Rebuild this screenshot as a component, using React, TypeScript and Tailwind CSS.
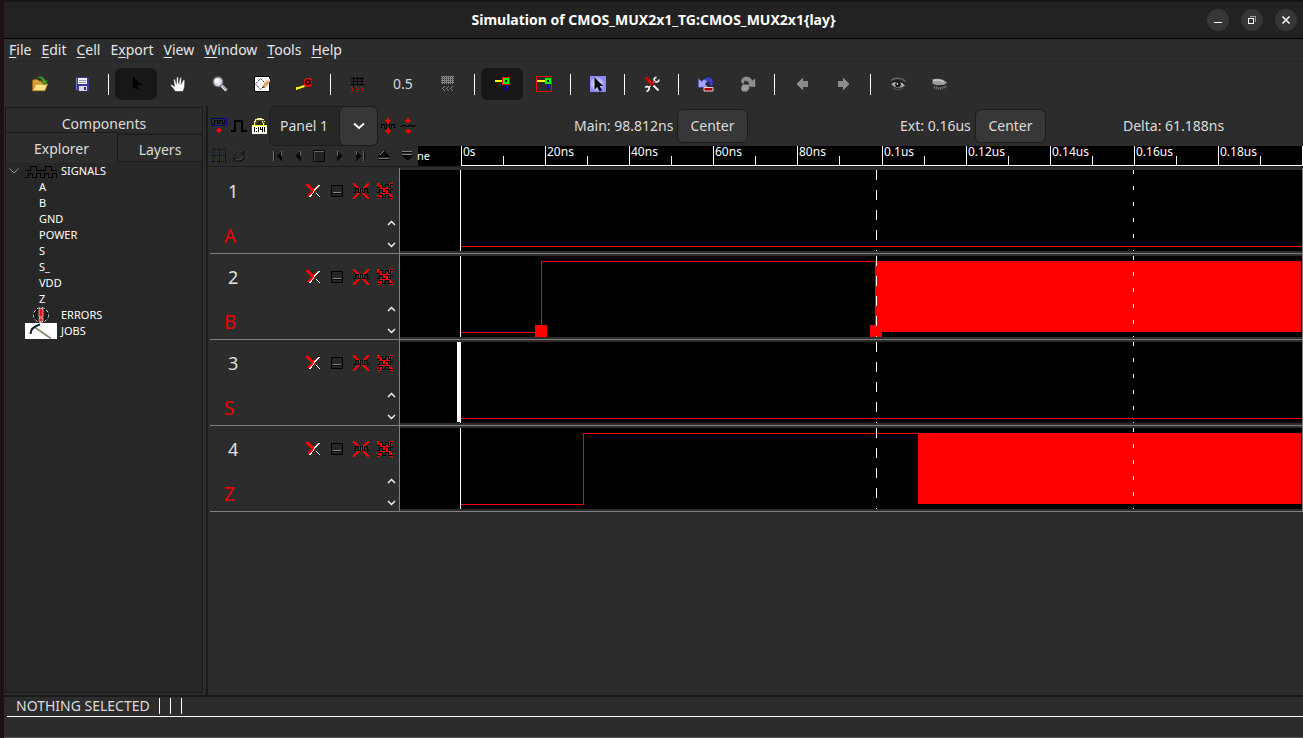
import React from "react";

type IconProps = { children: React.ReactNode; w?: number; h?: number };

function Pic({ children, w = 16, h = 16 }: IconProps) {
  return (
    <svg width={w} height={h} viewBox={`0 0 ${w} ${h}`} className="block shrink-0" aria-hidden="true" shapeRendering="crispEdges">
      {children}
    </svg>
  );
}

function Smooth({ children, w = 16, h = 16 }: IconProps) {
  return (
    <svg width={w} height={h} viewBox={`0 0 ${w} ${h}`} className="block shrink-0" aria-hidden="true" fill="none">
      {children}
    </svg>
  );
}

/* ---------- main toolbar icons ---------- */

const OpenIcon = () => (
  <Smooth>
    <path d="M.5 14.500V5l1-1.500h4L7 5h5.500v9.500z" fill="#d9a23e" stroke="#8f6418" />
    <path d="M.8 14.700 3.500 8h12L12.800 14.700z" fill="#fbe08a" stroke="#b98a2a" />
    <path d="M5 1.500C8-.300 12 .300 13 4.500h2.800L12.300 9 9 5h1.800C10 2.500 8 1.800 5 1.500z" fill="#4aa52c" stroke="#245f12" strokeWidth=".6" />
  </Smooth>
);

const SaveIcon = () => (
  <Pic>
    <path d="M2 1h12v1h1v13H3l-1-1z" fill="#3a3a9c" />
    <path d="M4 2h9v6H4z" fill="#f2f2f2" />
    <path d="M5 4h7v1H5zM5 6h7v1H5z" fill="#9c9cac" />
    <path d="M5 10h8v5H5z" fill="#d8d8e0" />
    <path d="M10 11h2v3h-2z" fill="#2a2a80" />
    <path d="M2 2h1v12H2z" fill="#7676c6" />
  </Pic>
);

const PointerIcon = () => (
  <Pic>
    <path d="M5 1h1v1h1v1h1v1h1v1h1v1h1v1h1v1h1v1H9v1h1v2h1v2H9v-1H8v-2H7v1H6v1H5z" fill="#000" />
  </Pic>
);

const HandIcon = () => (
  <Smooth>
    <path
      d="M5 15.500C4 13 2.500 12 .8 9.700c-.5-1 .8-1.500 1.600-.8l2 1.600L3.600 3.800c0-1.200 1.400-1.200 1.700 0l1 3.600L6.600 1.600c.2-1.200 1.600-1.100 1.700 0l.3 5.600L10 2c.4-1 1.700-.8 1.600.4l-.4 5.400 1.900-3.600c.7-1 1.900-.4 1.700.7C14.500 8 15 11 14 12.800l-1 2.700z"
      fill="#fff"
      stroke="#111"
      strokeWidth=".5"
    />
    <path d="M6.500 5.500v3.500M9 5.500v3.500M11.200 6v3" stroke="#777" strokeWidth=".5" />
  </Smooth>
);

const ZoomIcon = () => (
  <Smooth>
    <path d="m9.500 9.500 5 5" stroke="#e8e8e8" strokeWidth="3" />
    <path d="m10 9.500 5 5" stroke="#666" strokeWidth="1" />
    <circle cx="6" cy="5.800" r="4.800" fill="#dcdcec" stroke="#777" strokeWidth="1.300" />
    <circle cx="5" cy="4.800" r="2.200" fill="#fafaff" />
  </Smooth>
);

const OutlineIcon = () => (
  <Smooth>
    <path d="M.5.500h15v15H.500z" fill="#fff" stroke="#000" />
    <path d="M6.500 2.500 12 8l-5.500 5.500L1.500 8z" stroke="#23237c" strokeWidth="1" strokeDasharray="2 1" />
    <path d="M8.500 10 13 4l3 2-4.500 5.500z" fill="#d8a868" />
    <path d="M13 4 14.500 2 16 3v3z" fill="#efe0c0" />
    <path d="M8.500 10l3 1.500-3.500.800z" fill="#5a3a1a" />
  </Smooth>
);

const MeasureIcon = () => (
  <Smooth>
    <path d="M8 3.500 10 2h5.500v8.500L9 11 8 9z" fill="#f00" />
    <circle cx="11.800" cy="6" r="2.600" fill="#400" stroke="#000" />
    <circle cx="11.800" cy="6" r="1" fill="#c22" />
    <path d="M1 12.500 8.500 10" stroke="#ff0" strokeWidth="2" />
    <path d="M.500 11v3" stroke="#ff0" />
  </Smooth>
);

const CoarseGridIcon = () => (
  <Pic>
    <path d="M3 1h1v9H3zM7 1h1v9H7zM11 1h1v9h-1zM1 2h13v1H1zM1 5h13v1H1zM1 8h13v1H1z" fill="#000" />
    <path d="M1 11h1v1h1v1h1v1H3v1H2v1H1v-1h1v-1h1v-1H2v-1H1zM6 11h1v1h1v1h1v1H8v1H7v1H6v-1h1v-1h1v-1H7v-1H6zM11 11h1v1h1v1h1v1h-1v1h-1v1h-1v-1h1v-1h1v-1h-1v-1h-1z" fill="#f00" />
  </Pic>
);

const FineGridIcon = () => (
  <Pic>
    <path
      d="M2.500 0v8M4.500 0v8M6.500 0v8M8.500 0v8M10.500 0v8M12.500 0v8M1 .500h13M1 2.500h13M1 4.500h13M1 6.500h13"
      stroke="#838383"
      fill="none"
    />
    <path d="M4 10h1v1H4v1H3v1h1v1h1v1H4v-1H3v-1H2v-1h1v-1h1zM8 10h1v1H8v1H7v1h1v1h1v1H8v-1H7v-1H6v-1h1v-1h1zM12 10h1v1h-1v1h-1v1h1v1h1v1h-1v-1h-1v-1h-1v-1h1v-1h1z" fill="#838383" />
  </Pic>
);

const ObjectsIcon = () => (
  <Pic>
    <path d="M1 4h7v2H1z" fill="#ff0" />
    <path d="M12 9h2v5h-2z" fill="#00f" />
    <path d="M8 1h8v8H8z" fill="#f00" />
    <path d="M9 2h6v6H9z" fill="#0f0" />
    <path d="M11 4h2v2h-2z" fill="#000" />
  </Pic>
);

const AreaIcon = () => (
  <Pic>
    <path d="M1 4h8v2H1z" fill="#ff0" />
    <path d="M11 8h2v5h-2z" fill="#00f" />
    <path d="M9 2h6v6H9z" fill="#0f0" />
    <path d="M11 4h2v2h-2z" fill="#000" />
    <path d="M.500.500h15v15H.500z" fill="none" stroke="#f00" />
  </Pic>
);

const SpecialSelectIcon = () => (
  <Smooth>
    <path d="M0 0h16v16H0z" fill="#8c8cf4" />
    <circle cx="7" cy="8" r="6.500" fill="#b4b4fa" />
    <circle cx="7" cy="8" r="4" fill="#dadaff" />
    <path d="M4.500 1.500v12L7.300 11l2.400 4.500 2.300-1.300L9.700 10h3.500z" fill="#000" />
  </Smooth>
);

const ToolsIcon = () => (
  <Smooth>
    <path d="m4.500 12 6.500-7" stroke="#fff" strokeWidth="1.300" />
    <path d="M12.500 1.300C10 1.300 9.500 4 11 5.300s3.800.700 4-1.800M1.300 11.500c1-1.500 3.500-1 3.700.800S3.700 15.200 2.500 15" stroke="#f4f4f4" strokeWidth="1.700" />
    <path d="M1.500 1.500 9 9" stroke="#e00000" strokeWidth="3" />
    <path d="M2 5 5 2M8 9l3-4M6 10l3-1" stroke="#900" strokeWidth="1.200" />
    <path d="m9.500 9.500 5 5" stroke="#eee" strokeWidth="2" />
  </Smooth>
);

const UndoIcon = () => (
  <Smooth>
    <path d="M5 5.500C6 2 9 .500 12 1.500c2.800 1 3.300 4 2.800 8l-3.300.500c.5-3-.3-4.500-2-4L7.500 8z" fill="#3f3fc0" stroke="#23238c" strokeWidth=".5" />
    <path d="M.500 2.500v8.800L10 11 7 8.300 9 5 6 3.500 3.500 5.500z" fill="#a6a6f6" stroke="#5a5ac8" strokeWidth=".6" />
    <rect x="5.500" y="11" width="10" height="4.500" rx="1" fill="#f4d0d0" />
    <path d="M6.500 12h8v2.500h-8z" fill="#a00000" />
  </Smooth>
);

const RedoIcon = () => (
  <Smooth>
    <path d="M1 6C1.500 1.500 4.500.300 7.500.800c2.500.400 4 2 4.500 4L15.200 2.500V11L7 10.500 9 8C8.500 5.500 6.500 4.300 4.500 5L3.500 8z" fill="#8e8e8e" />
    <path d="M2.500 8.500h5L9.500 12 7 15.500H2.500L1 12.500z" fill="#9a9a9a" />
    <path d="M4 6.500C5.500 4.500 8 5 9 8" stroke="#555" strokeWidth=".7" />
  </Smooth>
);

const PrevIcon = () => (
  <Pic>
    <path d="M2 8h1V7h1V6h1V5h1V4h1V3h1V2h1v3h5v6H9v3H8v-1H7v-1H6v-1H5v-1H4V9H3V8z" fill="#8b8b8b" />
  </Pic>
);

const NextIcon = () => (
  <Pic>
    <path d="M14 8h-1V7h-1V6h-1V5h-1V4H9V3H8V2H7v3H2v6h5v3h1v-1h1v-1h1v-1h1v-1h1V9h1V8z" fill="#8b8b8b" />
  </Pic>
);

const OpenEyeIcon = () => (
  <Smooth>
    <path d="M1 4.500C5 1.500 12 1.500 15.500 5.500" stroke="#666" strokeWidth="1.500" />
    <path d="M.500 7.500C5 4 12 4.500 15.500 9 12 12.500 5 13 .500 7.500z" fill="#a8a8a8" />
    <path d="M.500 7.500C5 4 12 4.500 15.500 9" stroke="#111" strokeWidth="1.200" />
    <circle cx="8" cy="8.500" r="2.800" fill="#111" />
    <circle cx="7.300" cy="7.800" r=".9" fill="#eee" />
    <path d="M3 12c3 2 7 2 10 0" stroke="#777" strokeDasharray="1 1" />
  </Smooth>
);

const ClosedEyeIcon = () => (
  <Smooth>
    <path d="M.500 3.500C5 2 12 2.500 15.500 7.500 13 9.500 4 10.500.500 8z" fill="#9a9a9a" />
    <path d="M1 4.500c4-1 8-.500 11 1.500" stroke="#c8c8c8" strokeWidth="1.500" />
    <path d="M1 8.500c4 2.500 11 2 14.500-1" stroke="#222" strokeWidth="1.300" />
    <path d="M2 11c4 2 8 2 12-1" stroke="#888" strokeWidth="2.500" strokeDasharray="1 1" />
  </Smooth>
);

/* ---------- waveform icons ---------- */

const AddPanelIcon = () => (
  <Pic>
    <path d="M.500.500h15v7H.500z" fill="none" stroke="#00008b" />
    <path d="M2 5.500h1.500v-3h3v3h2v-3h3v3h1.500v-3H14" fill="none" stroke="#000" />
    <path d="M8 10h1v1h1v1h1v1H9v2H7v-2H5v-1h1v-1h1v-1z" fill="#f00" />
  </Pic>
);

const PulseIcon = () => (
  <Pic>
    <path d="M0 13h4V3h7v10h5" fill="none" stroke="#000" strokeWidth="2" />
  </Pic>
);

const LockIcon = () => (
  <Pic>
    <path d="M4 8V4h1V2h2V1h3v1h2v2h1v4" fill="none" stroke="#f4f0a0" strokeWidth="2" />
    <path d="M4 7V4h1V2h7v2h1v3" fill="none" stroke="#555500" />
    <path d="M1 7h15v9H1z" fill="#fffff0" />
    <path d="M1 7h15v1H1z" fill="#ff0" />
    <path d="M3 9h1v5H3zM5 10h1v1H5zM5 13h1v1H5zM7 9h1v5H7zM9 9h1v3H9zM10 11h1v1h-1zM11 9h1v5h-1zM13 9h1v5h-1z" fill="#000" />
  </Pic>
);

const GrowIcon = () => (
  <Pic>
    <path d="M0 9.500h1.500v-3h3v4h2v-5h3v5h2v-4h3v3H16" fill="none" stroke="#000" />
    <path d="M7 0h2v2h2v1h-1v1H9v2H7V4H6V3H5V2h2zM7 16h2v-2h2v-1h-1v-1H9v-2H7v2H6v1H5v1h2z" fill="#f00" />
  </Pic>
);

const ShrinkIcon = () => (
  <Pic>
    <path d="M0 8.500h2v-1h3v1h3v-1h3v1h2v-1h3" fill="none" stroke="#000" />
    <path d="M7 0h2v2h2v1h-1v1H9v1H7V4H6V3H5V2h2zM7 16h2v-2h2v-1h-1v-1H9v-1H7v1H6v1H5v1h2z" fill="#f00" />
  </Pic>
);

const GridToggleIcon = () => (
  <Pic>
    <path d="M2.500 0v16M8.500 0v16M14.500 0v16M0 1.500h16M0 7.500h16M0 13.500h16" fill="none" stroke="#000070" strokeDasharray="1 1" />
  </Pic>
);

const RefreshIcon = () => (
  <Smooth>
    <path d="M3 7C4 3 9 2 12 4.500M13 9c-1 4-6 5-9 2.500" stroke="#0c0c0c" strokeWidth="1.600" />
    <path d="M3 6C4 3 8 2 11 4M12 9c-1 3-5 4-8 2" stroke="#686868" strokeWidth=".7" />
    <path d="M14 2v5H9zM2 14V9h5z" fill="#1c1c1c" />
  </Smooth>
);

const ToStartIcon = () => (
  <Pic w={11} h={12}>
    <path d="M1 1h1v10H1z" fill="#777" />
    <path d="M2 1h1v10H2zM9 1h1v10H9zM8 2h1v8H8zM7 3h1v6H7zM6 4h1v4H6zM5 5h1v2H5z" fill="#090909" />
    <path d="M9 1h1v5H9z" fill="#666" />
  </Pic>
);

const BackIcon = () => (
  <Pic w={7} h={12}>
    <path d="M6 1v10H5v-1H4V9H3V8H2V7H1V5h1V4h1V3h1V2h1V1z" fill="#090909" />
    <path d="M5 1h1v5H5z" fill="#666" />
  </Pic>
);

const StopIcon = () => (
  <Pic w={12} h={12}>
    <path d="M.500.500h11v11H.500z" fill="#222" stroke="#050505" />
    <path d="M1 1h10v1H1z" fill="#6b6b6b" />
    <path d="M1 2h1v9H1z" fill="#444" />
  </Pic>
);

const ForwardIcon = () => (
  <Pic w={7} h={12}>
    <path d="M0 1v10h1v-1h1V9h1V8h1V7h1V5H4V4H3V3H2V2H1V1z" fill="#090909" />
    <path d="M0 1h1v5H0z" fill="#666" />
  </Pic>
);

const ToEndIcon = () => (
  <Pic w={11} h={12}>
    <path d="M8 1h2v10H8zM1 1h1v1h1v1h1v1h1v1h1v2H5v1H4v1H3v1H2v1H1z" fill="#090909" />
    <path d="M8 1h1v10H8zM1 1h1v4H1z" fill="#6b6b6b" />
  </Pic>
);

const FasterIcon = () => (
  <Pic w={12} h={12}>
    <path d="M5 1h2v1h1v1h1v1h1v1h1v1h1v1H0V6h1V5h1V4h1V3h1V2h1zM0 9h12v1H0z" fill="#090909" />
    <path d="M5 1h1v1H5zM4 2h1v1H4zM3 3h1v1H3zM2 4h1v1H2zM1 8h10v1H1z" fill="#777" />
  </Pic>
);

const SlowerIcon = () => (
  <Pic w={12} h={12}>
    <path d="M1 2h10v1H1zM0 5h12v1h-1v1h-1v1H9v1H8v1H5V9H4V8H3V7H2V6H0z" fill="#090909" />
    <path d="M1 1h10v1H1zM1 4h10v1H1z" fill="#808080" />
  </Pic>
);

const CloseIcon = () => (
  <Pic>
    <path d="M13 2h2v1h-1v1h-1v1h-1v1h-1v1h-1v1H9v2H8v1H7v2H6v1H4v-1h1v-2h1V9h1V8h1V6h1V5h1V4h1V3h1V2zM10 9h1v1h1v1h1v1h1v1h1v1h-1v-1h-1v-1h-1v-1h-1v-1h-1z" fill="#fff" />
    <path d="M1 1h3v1h1v1h1v1h1v1h1v1h1V5h1V4h1V3h1V2h1v1h-1v1h-1v1h-1v1H9v2h1v1h1v1h-1V9H9V8H8v2H7v1H6v1H5v1H3v-2h1v-1h1V9h1V7H5V6H4V5H3V4H2V3H1z" fill="#f00" />
  </Pic>
);

const MinimizeIcon = () => (
  <Pic w={12} h={12}>
    <path d="M.500.500h11v11H.500z" fill="#262626" stroke="#000" />
    <path d="M2 7h8v1H2z" fill="#858585" />
    <path d="M2 8h8v1H2z" fill="#000" />
  </Pic>
);

const RemoveWaveIcon = () => (
  <Pic>
    <path d="M0 0h2v1h1v1h1v1h1v1h1v1h1v1h2V5h1V4h1V3h1V2h1V1h1V0h2v2h-1v1h-1v1h-1v1h-1v1h-1v4h1v1h1v1h1v1h1v1h1v2h-2v-1h-1v-1h-1v-1h-1v-1h-1v-1H9v-1H7v1H6v1H5v1H4v1H3v1H2v1H0v-2h1v-1h1v-1h1v-1h1v-1h1V6H4V5H3V4H2V3H1V2H0z" fill="#f00" />
    <path d="M0 9.500h2.500v-4h3v4h2v-4h2v4h2v-4h3v4H16" fill="none" stroke="#000" />
  </Pic>
);

const RemoveAllWavesIcon = () => (
  <Pic>
    <path d="M0 0h3v1h1v1h1v1h1v1h1v1h2V4h1V3h1V2h1V1h1V0h3v3h-1v1h-1v1h-1v1h-1v1h-1v2h1v1h1v1h1v1h1v1h1v3h-3v-1h-1v-1h-1v-1h-1v-1H9v-1H7v1H6v1H5v1H4v1H3v1H0v-3h1v-1h1v-1h1v-1h1V9h1V7H4V6H3V5H2V4H1V3H0z" fill="#f00" />
    <path d="M0 4.500h2.500v-3h3v3h3v-3h3v3h2v-3H16M0 9.500h2.500v-3h3v3h3v-3h3v3h2v-3H16M0 14.500h2.500v-3h3v3h3v-3h3v3H16" fill="none" stroke="#000" />
  </Pic>
);

/* ---------- title bar and menus ---------- */

function TitleBar() {
  const button = "flex size-[22px] items-center justify-center rounded-full bg-[#373737] text-white";
  return (
    <header className="grid h-[39px] grid-cols-[1fr_auto_1fr] items-center border-t-2 border-b border-t-[#151515] border-b-black bg-[#222222]">
      <span />
      <h1 className="text-sm font-bold text-white">Simulation of CMOS_MUX2x1_TG:CMOS_MUX2x1&#123;lay&#125;</h1>
      <div className="flex justify-end gap-3 pr-1.5">
        <button type="button" aria-label="Minimize" className={button}>
          <Pic w={10} h={10}>
            <path d="M1 7h8v1H1z" fill="#fff" />
          </Pic>
        </button>
        <button type="button" aria-label="Restore" className={button}>
          <Pic w={10} h={10}>
            <path d="M3 1h6v6H8V2H3z" fill="#999" />
            <path d="M1.500 3.500h5v5h-5z" fill="none" stroke="#fff" />
          </Pic>
        </button>
        <button type="button" aria-label="Close" className={button}>
          <Smooth w={10} h={10}>
            <path d="m1.500 1.500 7 7m0-7-7 7" stroke="#fff" strokeWidth="1.500" />
          </Smooth>
        </button>
      </div>
    </header>
  );
}

const menus: [string, string, string][] = [
  ["", "F", "ile"],
  ["", "E", "dit"],
  ["", "C", "ell"],
  ["E", "x", "port"],
  ["", "V", "iew"],
  ["", "W", "indow"],
  ["", "T", "ools"],
  ["", "H", "elp"],
];

function MenuBar() {
  return (
    <nav className="flex h-[23px] items-center gap-2.5 border-b border-[#272727] px-[5px] text-sm text-[#e6e6e6]">
      {menus.map(([before, key, after]) => (
        <button type="button" key={before + key + after}>
          {before}
          <span className="underline decoration-1 underline-offset-2">{key}</span>
          {after}
        </button>
      ))}
    </nav>
  );
}

function Tool({ label, active, children }: { label: string; active?: boolean; children: React.ReactNode }) {
  return (
    <button
      type="button"
      aria-label={label}
      aria-pressed={active}
      className={
        active
          ? "flex h-8 w-[42px] items-center justify-center rounded-md bg-[#171717]"
          : "flex h-8 w-[42px] items-center justify-center rounded-md"
      }
    >
      {children}
    </button>
  );
}

const Divider = () => (
  <div className="flex w-3 pl-[5px]">
    <div className="h-[21px] w-px bg-white" />
  </div>
);

function Toolbar() {
  return (
    <div className="flex h-11 items-center pl-[15px]" role="toolbar" aria-label="Main">
      <Tool label="Open library"><OpenIcon /></Tool>
      <Tool label="Save library"><SaveIcon /></Tool>
      <Divider />
      <Tool label="Select" active><PointerIcon /></Tool>
      <Tool label="Pan"><HandIcon /></Tool>
      <Tool label="Zoom"><ZoomIcon /></Tool>
      <Tool label="Outline edit"><OutlineIcon /></Tool>
      <Tool label="Measure"><MeasureIcon /></Tool>
      <Divider />
      <Tool label="Larger grid"><CoarseGridIcon /></Tool>
      <button type="button" className="h-8 w-12 text-sm text-[#d8d8d8]">0.5</button>
      <Tool label="Smaller grid"><FineGridIcon /></Tool>
      <Divider />
      <Tool label="Select objects" active><ObjectsIcon /></Tool>
      <Tool label="Select area"><AreaIcon /></Tool>
      <Divider />
      <Tool label="Special select"><SpecialSelectIcon /></Tool>
      <Divider />
      <Tool label="Preferences"><ToolsIcon /></Tool>
      <Divider />
      <Tool label="Undo"><UndoIcon /></Tool>
      <Tool label="Redo"><RedoIcon /></Tool>
      <Divider />
      <Tool label="Back"><PrevIcon /></Tool>
      <Tool label="Forward"><NextIcon /></Tool>
      <Divider />
      <Tool label="Expand cells"><OpenEyeIcon /></Tool>
      <Tool label="Unexpand cells"><ClosedEyeIcon /></Tool>
    </div>
  );
}

/* ---------- explorer ---------- */

const signals = ["A", "B", "GND", "POWER", "S", "S_", "VDD", "Z"];

function Explorer() {
  return (
    <aside className="mt-px mb-0.5 ml-px flex w-[198px] shrink-0 flex-col border border-[#1a1a1a] bg-[#272727]">
      <button type="button" className="h-6 bg-[#2c2c2c] pt-2 text-center text-sm leading-4 text-[#dcdcdc]">
        Components
      </button>
      <div className="flex h-[31px] text-sm text-[#dcdcdc]">
        <button type="button" className="w-28 border-t border-r border-[#1a1a1a] bg-[#2c2c2c] pt-px">
          Explorer
        </button>
        <button type="button" className="mt-0.5 mb-px flex-1 border-y border-[#1a1a1a] bg-[#2c2c2c] pt-1">
          Layers
        </button>
      </div>
      <ul className="text-[11px] leading-4 text-white">
        <li>
          <div className="flex items-center">
            <div className="flex w-[19px] pl-[3px]">
              <Smooth w={10} h={6}>
                <path d="m.500.500 4.500 4.500 4.500-4.500" stroke="#9a9a9a" />
              </Smooth>
            </div>
            <Pic w={32} h={16}>
              <path d="M0 7.500h5.500v-4h6v4h9v-4h6v4H32M0 14.500h3.500v-4h4v4h4v-4h4v4h4v-4h4v4h4v-4h4v4" fill="none" stroke="#000" />
            </Pic>
            <span className="pl-1">SIGNALS</span>
          </div>
          <ul>
            {signals.map((name) => (
              <li key={name} className="pl-[33px]">{name}</li>
            ))}
          </ul>
        </li>
        <li className="flex pl-[19px]">
          <Smooth w={32}>
            <circle cx="16" cy="8" r="7.300" fill="#1c1c1c" stroke="#fff" strokeDasharray="3 2" />
            <circle cx="16" cy="8" r="6.500" fill="none" stroke="#000" />
            <path d="M14 1.500h4v8.500h-4zM14 11h4v3.500h-4z" fill="#f01010" stroke="#fff" strokeWidth=".6" />
          </Smooth>
          <span className="pl-1">ERRORS</span>
        </li>
        <li className="flex pl-[19px]">
          <Smooth w={32}>
            <path d="M0 0h32v16H0z" fill="#fff" />
            <path d="M10 4.500 26 15.500" stroke="#8a8a72" strokeWidth="1.800" />
            <path d="M5.500 11C5.500 7 8 3.500 15 1.500" stroke="#102030" strokeWidth="2" />
          </Smooth>
          <span className="pl-1">JOBS</span>
        </li>
      </ul>
    </aside>
  );
}

/* ---------- waveform window ---------- */

function CursorButton() {
  return (
    <button type="button" className="h-[34px] w-[71px] rounded-md border border-[#1c1c1c] bg-[#373737] text-sm text-[#dcdcdc]">
      Center
    </button>
  );
}

function WaveToolbar() {
  return (
    <div className="flex h-10 items-center pl-[3px] text-sm text-[#dcdcdc]">
      <div className="flex w-[58px] gap-1">
        <button type="button" aria-label="New panel"><AddPanelIcon /></button>
        <button type="button" aria-label="Digital waveform"><PulseIcon /></button>
        <button type="button" aria-label="Lock time"><LockIcon /></button>
      </div>
      <div className="relative h-10 w-[109px]">
        <select aria-label="Panel" className="h-10 w-full appearance-none rounded-md border border-[#1c1c1c] bg-[#272727] px-2.5">
          <option>Panel 1</option>
        </select>
        <span className="pointer-events-none absolute inset-y-0 right-0 flex w-[39px] items-center justify-center rounded-md border border-[#1c1c1c] bg-[#373737]">
          <Smooth w={12} h={8}>
            <path d="m1 1.500 5 4.500 5-4.500" stroke="#fff" strokeWidth="2" />
          </Smooth>
        </span>
      </div>
      <div className="flex gap-1 pl-0.5">
        <button type="button" aria-label="Taller panels"><GrowIcon /></button>
        <button type="button" aria-label="Shorter panels"><ShrinkIcon /></button>
      </div>
      <div className="ml-[158px] flex w-[174px] items-center justify-between">
        <span>Main: 98.812ns</span>
        <CursorButton />
      </div>
      <div className="ml-[152px] flex w-[146px] items-center justify-between">
        <span>Ext: 0.16us</span>
        <CursorButton />
      </div>
      <span className="ml-[77px]">Delta: 61.188ns</span>
    </div>
  );
}

const ticks = ["0s", "20ns", "40ns", "60ns", "80ns", "0.1us", "0.12us", "0.14us", "0.16us", "0.18us"];
const TICK_SPACING = 84.1;

function TimeRuler() {
  return (
    <svg className="block h-5 min-w-0 flex-1 overflow-visible bg-black" shapeRendering="crispEdges" fontSize="12" fill="#fff" aria-label="Time ruler">
      <text x="-1" y="14" fontSize="11">ne</text>
      <rect x="43" y="19" width="100%" height="1" />
      {ticks.map((label, i) => {
        const x = Math.round(43 + i * TICK_SPACING);
        return (
          <g key={label}>
            <rect x={x} y="0" width="1" height="20" />
            <rect x={x + 42} y="10" width="1" height="10" />
            <text x={x + 2} y="10">{label}</text>
          </g>
        );
      })}
      <rect x={Math.round(43 + ticks.length * TICK_SPACING)} y="0" width="1" height="20" />
    </svg>
  );
}

function PlaybackBar() {
  return (
    <div className="flex h-5 items-center">
      <div className="flex w-[210px] shrink-0 items-center pl-[3px]">
        <div className="flex w-[61px] gap-1">
          <button type="button" aria-label="Show grid"><GridToggleIcon /></button>
          <button type="button" aria-label="Refresh"><RefreshIcon /></button>
        </div>
        <div className="flex flex-1 items-center justify-between pr-[5px]">
          <button type="button" aria-label="To start"><ToStartIcon /></button>
          <button type="button" aria-label="Play backwards"><BackIcon /></button>
          <button type="button" aria-label="Stop"><StopIcon /></button>
          <button type="button" aria-label="Play"><ForwardIcon /></button>
          <button type="button" aria-label="To end"><ToEndIcon /></button>
          <button type="button" aria-label="Faster"><FasterIcon /></button>
          <button type="button" aria-label="Slower"><SlowerIcon /></button>
        </div>
      </div>
      <TimeRuler />
    </div>
  );
}

type Wave = {
  signal: string;
  rise?: number;
  busy?: number;
  handles?: number[];
  selected?: boolean;
};

const waves: Wave[] = [
  { signal: "A" },
  { signal: "B", rise: 141, busy: 475, handles: [135, 470] },
  { signal: "S", selected: true },
  { signal: "Z", rise: 183, busy: 518 },
];

const ORIGIN = 60;
const HIGH = 5;
const LOW = 76;

function WavePlot({ rise, busy, handles = [], selected }: Wave) {
  return (
    <svg className="block h-[81px] w-full bg-black" shapeRendering="crispEdges" fill="#f00" aria-hidden="true">
      {rise === undefined || busy === undefined ? (
        <rect x={ORIGIN + 1} y={LOW} width="100%" height="1" />
      ) : (
        <>
          <rect x={ORIGIN + 1} y={LOW} width={rise - ORIGIN} height="1" />
          <rect x={rise} y={HIGH} width="1" height={LOW - HIGH + 1} />
          <rect x={rise} y={HIGH} width={busy - rise} height="1" />
          <rect x={busy} y={HIGH} width="100%" height={LOW - HIGH} />
          <line x1="100%" x2="100%" y1={HIGH} y2={LOW} stroke="#000" strokeWidth="2" />
          {handles.map((x) => (
            <rect key={x} x={x} y="69" width="12" height="12" />
          ))}
        </>
      )}
      <rect x={ORIGIN} y="0" width="1" height="81" fill="#fff" />
      {selected && <rect x={ORIGIN - 3} y="0" width="4" height="80" fill="#fff" />}
      <path d="M476.500 0v81" stroke="#fff" strokeDasharray="10 10" />
      <path d="M733.500 0v81" stroke="#fff" strokeDasharray="4 12" />
    </svg>
  );
}

function WavePanel({ number, wave }: { number: number; wave: Wave }) {
  return (
    <section className="flex h-[86px] border-b border-[#808080]">
      <div className="flex w-[190px] shrink-0 flex-col border-r border-[#808080]">
        <div className="flex h-[46px] shrink-0 items-center pr-1.5 pl-[18px]">
          <span className="flex-1 text-lg text-[#e0e0e0]">{number}</span>
          <div className="flex items-center gap-2">
            <button type="button" aria-label="Close panel"><CloseIcon /></button>
            <button type="button" aria-label="Minimize panel" className="flex w-4 justify-center"><MinimizeIcon /></button>
            <button type="button" aria-label="Remove signal"><RemoveWaveIcon /></button>
            <button type="button" aria-label="Remove all signals"><RemoveAllWavesIcon /></button>
          </div>
        </div>
        <div className="flex flex-1 justify-between pr-[3px] pl-3.5">
          <button type="button" className="pt-1 text-[19px] leading-7 text-[#f00000]">{wave.signal}</button>
          <div className="flex flex-col gap-4 pt-1.5">
            <button type="button" aria-label="Scroll up">
              <Smooth w={9} h={6}>
                <path d="m1 5 3.500-3.500L8 5" stroke="#fff" strokeWidth="1.300" />
              </Smooth>
            </button>
            <button type="button" aria-label="Scroll down">
              <Smooth w={9} h={6}>
                <path d="m1 1 3.500 3.500L8 1" stroke="#fff" strokeWidth="1.300" />
              </Smooth>
            </button>
          </div>
        </div>
      </div>
      <div className="min-w-0 flex-1 border-r border-[#808080] pt-0.5">
        <WavePlot {...wave} />
      </div>
    </section>
  );
}

function WaveWindow() {
  return (
    <main className="flex min-w-0 flex-1 flex-col overflow-x-clip">
      <WaveToolbar />
      <PlaybackBar />
      <div className="mb-px h-px bg-[#1c1c1c]" />
      <div className="pl-0.5">
        {waves.map((wave, i) => (
          <WavePanel key={wave.signal} number={i + 1} wave={wave} />
        ))}
      </div>
    </main>
  );
}

function StatusBar() {
  return (
    <footer className="h-[43px] border-t-2 border-b border-t-[#1a1a1a] border-b-[#5a5555] pl-[3px]">
      <div className="flex h-5 items-center border-b border-white pb-px pl-[9px] text-sm text-[#dcdcdc]">
        <span className="w-[143px] whitespace-nowrap">NOTHING SELECTED</span>
        <div className="flex gap-2.5">
          <span className="h-4 w-px bg-white" />
          <span className="h-4 w-px bg-white" />
          <span className="h-4 w-px bg-white" />
        </div>
      </div>
    </footer>
  );
}

export default function App() {
  return (
    <div className="flex min-h-screen flex-col border-l-4 border-[#1f1018] bg-[#2c2c2c] font-['Noto_Sans',sans-serif]">
      <TitleBar />
      <MenuBar />
      <Toolbar />
      <div className="flex flex-1">
        <Explorer />
        <div className="ml-[3px] w-0.5 shrink-0 bg-[#1a1a1a]" />
        <WaveWindow />
      </div>
      <StatusBar />
    </div>
  );
}
